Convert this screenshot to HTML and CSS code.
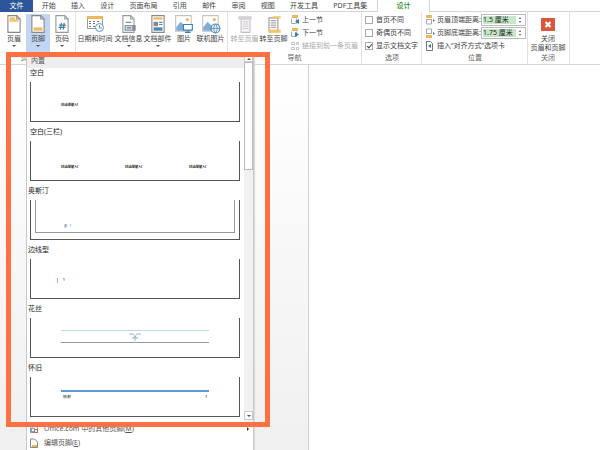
FILE: index.html
```html
<!DOCTYPE html>
<html lang="zh-CN">
<head>
<meta charset="utf-8">
<title>页脚</title>
<link rel="stylesheet" href="styles.css">
</head>
<body>
<header class="tabs">
  <button class="tab-file">文件</button>
  <nav class="tab-list">
    <button>开始</button><button>插入</button><button>设计</button><button>页面布局</button><button>引用</button><button>邮件</button><button>审阅</button><button>视图</button><button>开发工具</button><button>PDF工具集</button>
  </nav>
  <button class="tab-active">设计</button>
  <span class="tab-rest"></span>
</header>
<section class="ribbon">
  <div class="group g-hf">
    <div class="tools">
      <button class="tool"><svg width="16" height="20" viewBox="0 0 14 18"><path d="M1.500 1.500h8l3 3v12h-11z" fill="#fff" stroke="#888"/><path d="M9.500 1.500v3h3" fill="none" stroke="#888"/><path d="M3 3h5v2H3zM3 5h8v2H3z" fill="#f0c56e"/></svg><span>页眉</span><i class="caret"></i></button>
      <button class="tool on"><svg width="16" height="20" viewBox="0 0 14 18"><path d="M1.500 1.500h8l3 3v12h-11z" fill="#fff" stroke="#888"/><path d="M9.500 1.500v3h3" fill="none" stroke="#888"/><path d="M3 12h8v3H3z" fill="#edbd60"/></svg><span>页脚</span><i class="caret"></i></button>
      <button class="tool"><svg width="16" height="20" viewBox="0 0 14 18"><path d="M1.500 1.500h8l3 3v12h-11z" fill="#fff" stroke="#999"/><path d="M9.500 1.500v3h3" fill="none" stroke="#999"/><path d="M6.500 8l-1 6M9 8l-1 6M4.500 10h6M4 12h6" fill="none" stroke="#3f78a8"/></svg><span>页码</span><i class="caret"></i></button>
    </div>
    <div class="caption">页眉和页脚</div>
  </div>
  <div class="group">
    <div class="tools">
      <button class="tool date"><svg width="20" height="20" viewBox="0 0 20 20"><path d="M2.500 2.500h15v12h-15z" fill="#fff" stroke="#999"/><path d="M2 2h16v3H2z" fill="#edb75c"/><path d="M4 7h2v1H4zM8 7h2v1H8zM12 7h2v1h-2zM4 9h2v1H4zM8 9h2v1H8zM4 12h2v1H4zM8 12h2v1H8z" fill="#777"/><circle cx="14.500" cy="13.500" r="4" fill="#fff" stroke="#6194c6"/><path d="M14.500 11v3H17" fill="none" stroke="#6194c6"/></svg><span>日期和时间</span></button>
      <button class="tool wide"><svg width="16" height="20" viewBox="0 0 14 18"><path d="M1.500 1.500h7l3 3v12h-10z" fill="#fff" stroke="#999"/><path d="M8.500 1.500v3h3" fill="none" stroke="#999"/><path d="M4 7h5v1H4z" fill="#5484ae"/><path d="M3 10h10v5H3z" fill="#888"/><path d="M4 11h6v3H4z" fill="#dceaf5"/><path d="M5 12h4v1H5z" fill="#3c77ae"/></svg><span>文档信息</span><i class="caret"></i></button>
      <button class="tool wide"><svg width="16" height="20" viewBox="0 0 14 18"><path d="M1.500 1.500h11v15h-11z" fill="#fff" stroke="#888"/><path d="M3 3h8v2H3z" fill="#edb75c"/><path d="M3 7h4v4H3z" fill="#888"/><path d="M8 7h3v1H8zM8 9h3v1H8z" fill="#4c86b9"/><path d="M3 12h8v3H3z" fill="#4c86b9"/></svg><span>文档部件</span><i class="caret"></i></button>
      <button class="tool"><svg width="20" height="20" viewBox="0 0 18 18"><path d="M1.500 1.500h14v14h-14z" fill="#fff" stroke="#c4c4c4"/><path d="M2 12l4-5 4 4 2-2 3 3v3H2z" fill="#80add1"/><circle cx="12" cy="5" r="1.500" fill="#edb75c"/><path d="M8.500 9.500h8v5h-8z" fill="#fff" stroke="#3f7fb8"/><path d="M12 15h1v1h2v1h-5v-1h2z" fill="#3f7fb8"/></svg><span>图片</span></button>
      <button class="tool wide"><svg width="20" height="20" viewBox="0 0 18 18"><path d="M1.500 1.500h14v14h-14z" fill="#fff" stroke="#c4c4c4"/><path d="M2 12l4-5 4 4v4H2z" fill="#80add1"/><circle cx="12" cy="5" r="1.500" fill="#edb75c"/><circle cx="13" cy="13" r="4" fill="#e5f0f9" stroke="#4f88bd"/><path d="M9 13h8M13 9c-2 2-2 6 0 8M13 9c2 2 2 6 0 8" fill="none" stroke="#4f88bd" stroke-width=".7"/></svg><span>联机图片</span></button>
    </div>
    <div class="caption">插入</div>
  </div>
  <div class="group g-nav">
    <div class="tools">
      <button class="tool wide" disabled><svg width="16" height="20" viewBox="0 0 14 18"><path d="M3.500 4.500h8v12h-8z" fill="#f8f6f8" stroke="#c4c0c4"/><path d="M1 2h12v3H1z" fill="#d4d0d4"/><path d="M5 7h5M5 9h5M5 11h5M5 13h5" stroke="#ccc8cc"/></svg><span>转至页眉</span></button>
      <button class="tool wide"><svg width="16" height="20" viewBox="0 0 14 18"><path d="M2.500 3.500h8v12h-8z" fill="#fff" stroke="#999"/><path d="M6 2h7v2H6z" fill="#f0c56e"/><path d="M4 6h5M4 8h5M4 10h5M4 12h5" stroke="#aaa"/><path d="M2 14h11v3H2z" fill="#f0c56e"/></svg><span>转至页脚</span></button>
      <div class="rows">
        <button><svg width="10" height="10" viewBox="0 0 10 10"><path d="M2 0h6v3H2z" fill="#edb75c"/><path d="M1.500 3.500v5h5v-5" fill="none" stroke="#aaa"/><path d="M9 4v5L5 6.500z" fill="#3479b8"/></svg>上一节</button>
        <button><svg width="10" height="10" viewBox="0 0 10 10"><path d="M2 0h6v3H2z" fill="#edb75c"/><path d="M1.500 3.500v5h5v-5" fill="none" stroke="#aaa"/><path d="M5 4v5l4-2.500z" fill="#3479b8"/></svg>下一节</button>
        <button disabled><svg width="10" height="10" viewBox="0 0 10 10"><path d="M1.500 1.500h3v2h-3zM6.500 1.500h2v2h-2zM1.500 6.500h3v2h-3zM6.500 6.500h2v2h-2z" fill="none" stroke="#c4c4c4"/></svg>链接到前一条页眉</button>
      </div>
    </div>
    <div class="caption">导航</div>
  </div>
  <div class="group g-opt">
    <div class="tools rows">
      <label><input type="checkbox">首页不同</label>
      <label><input type="checkbox">奇偶页不同</label>
      <label><input type="checkbox" checked>显示文档文字</label>
    </div>
    <div class="caption">选项</div>
  </div>
  <div class="group g-pos">
    <div class="tools rows">
      <div class="field"><svg width="10" height="10" viewBox="0 0 10 10"><path d="M1 0h6v3H1z" fill="#edb75c"/><path d="M1 4.500h6M1.500 5v4h5V5" fill="none" stroke="#aaa"/><path d="M8 4l2 1.500L8 7z" fill="#3479b8"/></svg><label for="top">页眉顶端距离:</label><span class="spin"><input id="top" value="1.5 厘米"><span class="arrows"><i class="up"></i><i class="caret"></i></span></span></div>
      <div class="field"><svg width="10" height="10" viewBox="0 0 10 10"><path d="M1 7h6v3H1z" fill="#edb75c"/><path d="M1.500 5V1h5v4M1 5.500h6" fill="none" stroke="#aaa"/><path d="M8 4l2 1.500L8 7z" fill="#3479b8"/></svg><label for="bottom">页脚底端距离:</label><span class="spin"><input id="bottom" value="1.75 厘米"><span class="arrows"><i class="up"></i><i class="caret"></i></span></span></div>
      <button><svg width="10" height="10" viewBox="0 0 10 10"><path d="M1.500 .500h4l2 2v7h-6z" fill="#fff" stroke="#777"/><path d="M6 3v4L3 5z" fill="#3479b8"/></svg>插入“对齐方式”选项卡</button>
    </div>
    <div class="caption">位置</div>
  </div>
  <div class="group g-close">
    <div class="tools">
      <button class="tool"><svg width="14" height="20" viewBox="0 0 14 20"><path d="M0 4h14v13H0z" fill="#d9583b"/><path d="M4.500 8l5 5M9.500 8l-5 5" stroke="#fff" stroke-width="2"/></svg><span>关闭<br>页眉和页脚</span></button>
    </div>
    <div class="caption">关闭</div>
  </div>
</section>
<main class="workspace">
  <div class="margin"></div>
  <div class="paper"></div>
</main>

<aside class="menu">
  <div class="gallery">
    <div class="list">
      <h2>内置</h2>
      <section class="item inset"><h3>空白</h3><div class="preview cols"><span>[在此处键入]</span></div></section>
      <section class="item inset"><h3>空白(三栏)</h3><div class="preview cols"><span>[在此处键入]</span><span>[在此处键入]</span><span>[在此处键入]</span></div></section>
      <section class="item"><h3>奥斯汀</h3><div class="preview austin"><div><b>页</b> <span>1</span></div></div></section>
      <section class="item"><h3>边线型</h3><div class="preview side"><span>1</span></div></section>
      <section class="item"><h3>花丝</h3><div class="preview filigree"><div><svg width="14" height="9" viewBox="0 0 14 9"><path d="M1 1h4l1 1M13 1H9L8 2M7 2v6M4 5h6M5 5l2-2 2 2" fill="none" stroke="#94b9d8"/></svg></div></div></section>
      <section class="item"><h3>怀旧</h3><div class="preview retro"><div><span>[作者]</span><span>1</span></div></div></section>
    </div>
    <div class="scroll">
      <button class="sb" aria-label="向上"><i class="up"></i></button>
      <div class="thumb"></div>
      <div class="track"></div>
      <button class="sb down" aria-label="向下"><i class="caret"></i></button>
    </div>
  </div>
  <button class="command"><svg width="10" height="10" viewBox="0 0 10 10"><path d="M1.500 3.500L5 1l3.500 2.500v5h-7z" fill="#fff" stroke="#8299b5"/><circle cx="4" cy="6" r="2" fill="none" stroke="#3f7fb8"/><path d="M5 5h4v4H5z" fill="#e4623f"/><path d="M6 6h2v2H6z" fill="#fff"/></svg><span>Office.com 中的其他页脚(<u>M</u>)</span><i class="more"></i></button>
  <button class="command"><svg width="10" height="10" viewBox="0 0 10 10"><path d="M1.500 1h4l3 3v5.500h-7z" fill="#fff" stroke="#888"/><path d="M3 7h5v2H3z" fill="#edb75c"/></svg><span>编辑页脚(<u>E</u>)</span></button>
</aside>
<div class="highlight"></div>
</body>
</html>
```
FILE: styles.css
```css
* { box-sizing: border-box; }
body {
  margin: 0;
  height: 100vh;
  overflow: hidden;
  display: flex;
  flex-direction: column;
  background: #fff;
  color: #444;
  font: 7px/10px "Noto Sans", "Noto Sans CJK SC", sans-serif;
}
button, input { font: inherit; color: inherit; border: 0; padding: 0; margin: 0; background: none; }
button { white-space: nowrap; }
svg { display: block; flex: none; }
h2, h3 { margin: 0; font: inherit; }

.tabs { display: flex; height: 12px; }
.tab-file { width: 33px; background: #2b579a; color: #fff; }
.tab-list {
  width: 344px;
  padding: 0 2px 0 1px;
  display: flex;
  justify-content: space-around;
  border-bottom: 1px solid #d5d5d5;
}
.tab-active { width: 53px; border: solid #d5d5d5; border-width: 0 1px; color: #1e8a2a; font-weight: 500; }
.tab-rest { flex: 1; border-bottom: 1px solid #d5d5d5; }

.ribbon { display: flex; height: 53px; border-bottom: 1px solid #d5d5d5; }
.group { display: flex; flex-direction: column; border-right: 1px solid #e2e2e2; padding: 2px 2px 0 0; white-space: nowrap; }
.tools { display: flex; height: 38px; }
.caption { text-align: center; line-height: 12px; color: #666; }
.tool { width: 24px; display: flex; flex-direction: column; align-items: center; justify-content: flex-start; }
.tool span { line-height: 9px; margin-bottom: 2px; }
.tool.wide { width: 29px; }
.tool.date { width: 38px; }
.tool.on { background: #c2d5f2; }
button:disabled { color: #aaa; }
.g-hf { padding: 2px 1px 0 2px; }
.g-nav { padding-left: 2px; }
.g-opt, .g-pos { padding-left: 3px; }
.g-close .tool { width: 38px; }
.g-close { padding-left: 1px; }
.rows { display: grid; grid-template-rows: repeat(3, 1fr); align-items: center; }
.rows button, .rows label, .field { display: flex; align-items: center; gap: 2px; }
.g-nav .rows { padding-left: 2px; width: 71px; }
.g-opt { width: 60px; }
.g-opt label { gap: 3px; }
.g-opt input {
  appearance: none;
  width: 8px;
  height: 8px;
  border: 1px solid #aaa;
  background: #fff;
  position: relative;
}
.g-opt input:checked::after {
  content: "";
  position: absolute;
  left: 2px;
  top: 0;
  width: 2px;
  height: 4px;
  border: solid #444;
  border-width: 0 1px 1px 0;
  transform: rotate(40deg);
}
.g-pos { width: 106px; }
.field label { width: 42px; }
.spin { display: flex; width: 45px; height: 12px; border: 1px solid #bbb; padding: 1px; }
.spin input { width: 33px; min-width: 0; background: #c6e8c8; color: #222; }
.arrows { flex: 1; display: flex; flex-direction: column; align-items: center; justify-content: space-around; }
.caret, .up { width: 0; height: 0; border: 2px solid transparent; }
.caret { border-top-color: #555; border-bottom: 0; }
.up { border-bottom-color: #555; border-top: 0; }
.arrows .caret, .arrows .up { border-left-width: 1px; border-right-width: 1px; }

.workspace { flex: 1; display: flex; }
.margin { width: 309px; background: linear-gradient(#fff, #f0f0f0); border-right: 1px solid #d0d0d0; }
.paper { flex: 1; background: #fff; }

.menu {
  position: absolute;
  left: 26px;
  top: 55px;
  width: 228px;
  height: 400px;
  background: #fff;
  border: solid #c8c8c8;
  border-width: 0 1px;
  box-shadow: 1px 0 1px #ddd;
}
.gallery { display: flex; height: 367px; }
.list { flex: 1; overflow: hidden; }
.list h2 { height: 13px; padding-left: 4px; line-height: 11px; background: #eee; color: #555; }
.item { padding: 0 4px 5px 3px; }
.item h3 { height: 14px; margin-left: -2px; color: #222; }
.item.inset h3 { margin-left: 0; }
.preview { height: 40px; border: solid #555; border-width: 0 1px 1px; font-size: 3px; line-height: 4px; }
.cols { display: flex; gap: 47px; padding: 21px 30px 0; color: #000; font-weight: 700; }
.inset + .inset .cols { padding-top: 24px; }
.austin { padding: 0 4px 6px; color: #47658f; }
.austin div { height: 33px; border: solid #999; border-width: 0 1px 1px; padding: 24px 0 0 28px; }
.austin span { margin-left: 2px; }
.side { padding: 19px 0 0 26px; color: #24567f; font-weight: 700; }
.side span { display: block; border-left: 1px solid #8dbbe0; padding-left: 5px; line-height: 5px; }
.filigree { padding: 12px 30px 0; }
.filigree div { height: 13px; border: solid #bcd9ef; border-width: 1px 0; border-bottom-color: #999; display: flex; justify-content: center; align-items: flex-end; }
.retro { padding: 13px 30px 0; }
.retro div { border-top: 2px solid #5b9bd5; padding: 3px 2px 0; display: flex; justify-content: space-between; color: #264a36; font-weight: 700; }

.scroll { width: 9px; display: flex; flex-direction: column; background: #f1f1f1; padding-bottom: 2px; }
.sb { height: 7px; display: flex; align-items: center; justify-content: center; background: #fff; border: 1px solid #ccc; }
.down { height: 9px; }
.thumb { height: 108px; background: #fff; border: 1px solid #bbb; }
.track { flex: 1; }
.command { display: flex; align-items: center; gap: 5px; width: 100%; height: 14px; padding: 0 4px 0 2px; color: #555; }
.more { margin-left: auto; border: 2px solid transparent; border-left-color: #333; border-right: 0; }

.highlight {
  position: absolute;
  left: 6px;
  top: 52px;
  width: 264px;
  height: 375px;
  border: 5px solid #ff7043;
  pointer-events: none;
}
```
